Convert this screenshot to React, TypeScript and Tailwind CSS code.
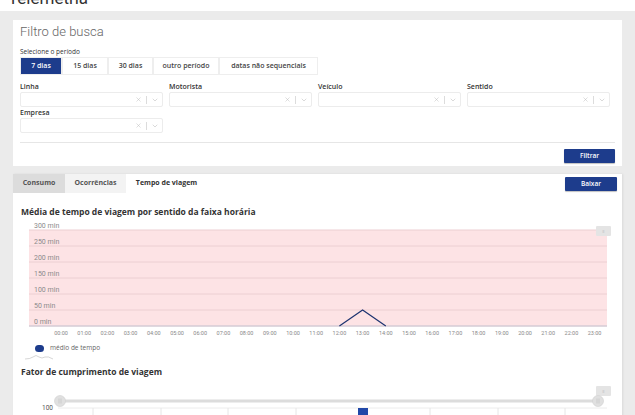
import { ChevronDown, X } from 'lucide-react'

const PERIODS = ['7 dias', '15 dias', '30 dias', 'outro período', 'datas não sequenciais']
const PERIOD_WIDTHS = ['w-[42px]', 'w-[46px]', 'w-[45px]', 'w-[66px]', 'w-[99px]']

const HOURS = Array.from({ length: 24 }, (_, i) => `${String(i).padStart(2, '0')}:00`)
const Y_LABELS = ['300 min', '250 min', '200 min', '150 min', '100 min', '50 min', '0 min']

function SelectBox() {
  return (
    <div className="h-[15px] w-[143px] border border-[#ececec] bg-white rounded-[2px] flex items-center justify-end pr-[3px] text-[#b5b5b5]">
      <X size={7} strokeWidth={1.5} />
      <div className="w-px h-[8px] bg-[#dcdcdc] mx-[4px]" />
      <ChevronDown size={8} strokeWidth={1.5} />
    </div>
  )
}

function Field({ label }: { label: string }) {
  return (
    <div className="flex flex-col gap-[1px]">
      <div className="text-[7px] leading-[9px] font-semibold text-[#333]">{label}</div>
      <SelectBox />
    </div>
  )
}

function FilterCard() {
  return (
    <div className="mx-[13px] mt-[9px] bg-white px-[7px] pt-[4px] pb-[6px] h-[146px]">
      <div className="text-[13px] leading-[15px] font-light text-[#666] font-['Roboto',sans-serif]">Filtro de busca</div>
      <div className="mt-[8px] text-[6.5px] leading-[9px] text-[#333]">Selecione o período</div>
      <div className="mt-[1px] flex h-[18px]">
        {PERIODS.map((p, i) => (
          <div
            key={p}
            className={`${PERIOD_WIDTHS[i]} flex items-center justify-center text-[7px] font-semibold border border-[#eeeeee] ${
              i === 0 ? 'bg-[#1d3c8c] text-white border-[#1d3c8c]' : 'text-[#444] bg-white'
            }`}
          >
            {p}
          </div>
        ))}
      </div>
      <div className="mt-[7px] grid grid-cols-[143px_143px_143px_143px] gap-x-[6px] gap-y-[1px]">
        <Field label="Linha" />
        <Field label="Motorista" />
        <Field label="Veículo" />
        <Field label="Sentido" />
        <Field label="Empresa" />
      </div>
      <div className="mt-[9px] h-px bg-[#e6e6e6]" />
      <div className="mt-[6px] flex justify-end">
        <button className="h-[14px] w-[51px] bg-[#1d3c8c] text-white text-[6.5px] font-semibold rounded-[1px] shadow-[0_1px_1px_rgba(0,0,0,0.25)]">
          Filtrar
        </button>
      </div>
    </div>
  )
}

function TravelChart() {
  const x0 = 40
  const step = 23.2
  const lines = [10, 26, 42, 58, 74, 90, 106]
  return (
    <svg width="600" height="120" className="block">
      <rect x="8" y="10" width="578" height="96" fill="#fde3e5" />
      {lines.map((y, i) => (
        <g key={y}>
          <line x1="8" x2="586" y1={y} y2={y} stroke="#eccfd2" strokeWidth="1" />
          <text x="13" y={y - 2} fontSize="7" fill="#8a8a8a" fontFamily="Roboto, sans-serif">
            {Y_LABELS[i]}
          </text>
        </g>
      ))}
      <line x1="8" x2="586" y1="106" y2="106" stroke="#c9c9d6" strokeWidth="1" />
      {HOURS.map((h, i) => (
        <text
          key={h}
          x={x0 + i * step}
          y="115"
          fontSize="5.5"
          fill="#888"
          textAnchor="middle"
          fontFamily="Roboto, sans-serif"
        >
          {h}
        </text>
      ))}
      <polyline
        points={`${x0 + 12 * step},106 ${x0 + 13 * step},90 ${x0 + 14 * step},106`}
        fill="none"
        stroke="#1d3370"
        strokeWidth="1.2"
      />
      <rect x="575" y="6" width="15" height="10" fill="#e4e4e4" rx="1" />
      <text x="582.5" y="12.5" fontSize="4" fill="#aaa" textAnchor="middle">
        ≡
      </text>
    </svg>
  )
}

function FactorSlider() {
  const cols = [93, 161, 228, 296, 363, 430, 498, 565]
  return (
    <svg width="600" height="32" className="block">
      <rect x="575" y="3" width="15" height="10" fill="#e4e4e4" rx="1" />
      <text x="582.5" y="9.5" fontSize="4" fill="#aaa" textAnchor="middle">
        ≡
      </text>
      <line x1="37" x2="579" y1="18" y2="18" stroke="#dcdcdc" strokeWidth="3" strokeLinecap="round" />
      <circle cx="39" cy="18" r="5.5" fill="#e0e0e0" stroke="#d0d0d0" strokeWidth="0.6" />
      <line x1="38" x2="38" y1="15.5" y2="20.5" stroke="#bbb" strokeWidth="0.5" />
      <line x1="40" x2="40" y1="15.5" y2="20.5" stroke="#bbb" strokeWidth="0.5" />
      <circle cx="577" cy="18" r="5.5" fill="#e0e0e0" stroke="#d0d0d0" strokeWidth="0.6" />
      <line x1="576" x2="576" y1="15.5" y2="20.5" stroke="#bbb" strokeWidth="0.5" />
      <line x1="578" x2="578" y1="15.5" y2="20.5" stroke="#bbb" strokeWidth="0.5" />
      <text x="21" y="27" fontSize="6.5" fill="#555" fontFamily="Roboto, sans-serif">
        100
      </text>
      <line x1="37" x2="586" y1="25" y2="25" stroke="#ececec" strokeWidth="1" />
      {cols.map((x) => (
        <line key={x} x1={x - 21} x2={x - 21} y1="25" y2="32" stroke="#e6e6e6" strokeWidth="1" />
      ))}
      <rect x="337" y="25" width="10" height="8" fill="#2148a8" />
    </svg>
  )
}

function ResultsCard() {
  return (
    <div className="mx-[13px] mt-[8px] bg-white h-[260px] shadow-[1px_0_2px_rgba(0,0,0,0.08)]">
      <div className="flex items-start justify-between">
        <div className="flex h-[19px] text-[7px] font-bold text-[#555]">
          <div className="w-[52px] bg-[#dcdcdc] flex items-center justify-center">Consumo</div>
          <div className="w-[61px] bg-[#f3f3f3] flex items-center justify-center">Ocorrências</div>
          <div className="w-[81px] bg-white text-[#333] flex items-center justify-center">Tempo de viagem</div>
        </div>
        <button className="mt-[3px] mr-[5px] h-[14px] w-[52px] bg-[#1d3c8c] text-white text-[6.5px] font-semibold rounded-[1px] shadow-[0_1px_1px_rgba(0,0,0,0.25)]">
          Baixar
        </button>
      </div>
      <div className="pl-[8px] mt-[13px] text-[8.5px] leading-[11px] font-bold text-[#333]">
        Média de tempo de viagem por sentido da faixa horária
      </div>
      <div className="pl-[8px] mt-[3px]">
        <TravelChart />
      </div>
      <div className="pl-[22px] mt-[3px] flex items-center gap-[6px] h-[10px]">
        <div className="w-[9px] h-[7px] rounded-full bg-[#1d3c8c]" />
        <div className="text-[6.5px] text-[#666]">médio de tempo</div>
      </div>
      <svg width="30" height="6" className="block ml-[11px] mt-[1px]">
        <path d="M1 5 Q6 5 9 3 Q12 0 15 3 Q18 5 21 3 Q24 2 29 5" fill="none" stroke="#bbb" strokeWidth="0.6" />
      </svg>
      <div className="pl-[8px] mt-[6px] text-[8.5px] leading-[11px] font-bold text-[#333]">
        Fator de cumprimento de viagem
      </div>
      <div className="pl-[8px] mt-[6px]">
        <FactorSlider />
      </div>
    </div>
  )
}

export default function App() {
  return (
    <div className="w-[635px] h-[415px] overflow-hidden bg-[#ebebeb] font-['Open_Sans',sans-serif]">
      <div className="h-[11px] bg-white overflow-hidden pl-[8px]">
        <div className="text-[17px] leading-[17px] -mt-[10px] text-[#333] font-['Roboto',sans-serif]">Telemetria</div>
      </div>
      <FilterCard />
      <ResultsCard />
    </div>
  )
}
